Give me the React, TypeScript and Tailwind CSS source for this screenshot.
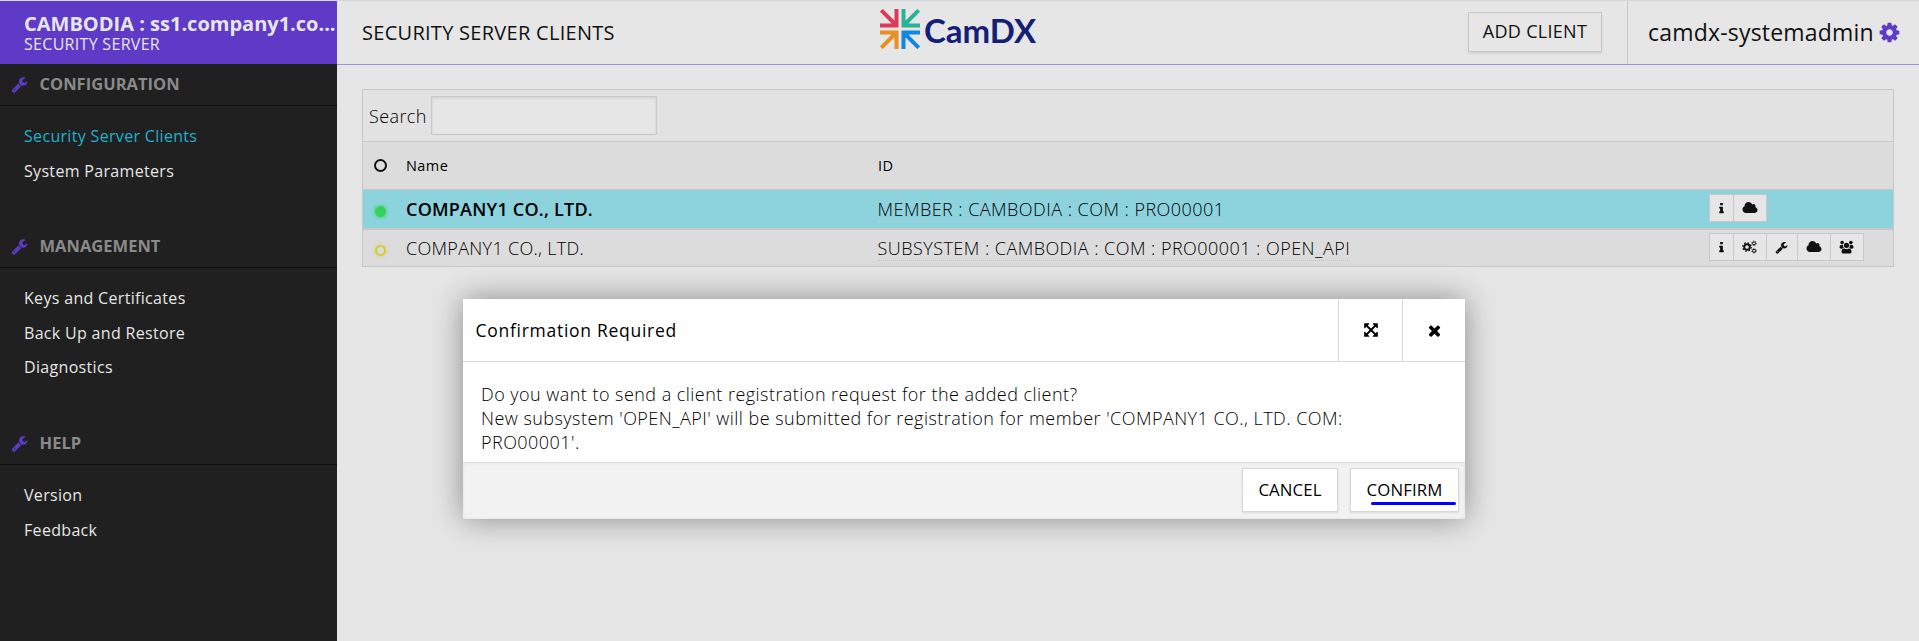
import React from "react";

const paths = {
  times:
    "M1490 1322q0 40-28 68l-136 136q-28 28-68 28t-68-28l-294-294-294 294q-28 28-68 28t-68-28l-136-136q-28-28-28-68t28-68l294-294-294-294q-28-28-28-68t28-68l136-136q28-28 68-28t68 28l294 294 294-294q28-28 68-28t68 28l136 136q28 28 28 68t-28 68l-294 294 294 294q28 28 28 68z",
  expand:
    "M1411 541l-355 355 355 355 144-144q29-31 70-14 39 17 39 59v448q0 26-19 45t-45 19h-448q-42 0-59-40-17-39 14-69l144-144-355-355-355 355 144 144q31 30 14 69-17 40-59 40h-448q-26 0-45-19t-19-45v-448q0-42 40-59 39-17 69 14l144 144 355-355-355-355-144 144q-19 19-45 19-12 0-24-5-40-17-40-59v-448q0-26 19-45t45-19h448q42 0 59 40 17 39-14 69l-144 144 355 355 355-355-144-144q-31-30-14-69 17-40 59-40h448q26 0 45 19t19 45v448q0 42-39 59-13 5-25 5-26 0-45-19z",
  info: "M1216 1344v128q0 26-19 45t-45 19h-512q-26 0-45-19t-19-45v-128q0-26 19-45t45-19h64v-384h-64q-26 0-45-19t-19-45v-128q0-26 19-45t45-19h384q26 0 45 19t19 45v576h64q26 0 45 19t19 45zm-128-1152v192q0 26-19 45t-45 19h-256q-26 0-45-19t-19-45v-192q0-26 19-45t45-19h256q26 0 45 19t19 45z",
  cloud:
    "M1984 1152q0 159-112.5 271.5t-271.5 112.5h-1088q-185 0-316.5-131.5t-131.5-316.5q0-132 71-241.5t187-163.5q-2-28-2-43 0-212 150-362t362-150q158 0 286.5 88t187.5 230q70-62 166-62 106 0 181 75t75 181q0 75-41 138 129 30 213 134.5t84 239.5z",
  wrench:
    "M448 1472q0-26-19-45t-45-19-45 19-19 45 19 45 45 19 45-19 19-45zm644-420l-682 682q-37 37-90 37-52 0-91-37l-106-108q-38-36-38-90 0-53 38-91l681-681q39 98 114.5 173.5t173.5 114.5zm634-435q0 39-23 106-47 134-164.5 217.5t-258.5 83.5q-185 0-316.5-131.5t-131.5-316.5 131.5-316.5 316.5-131.5q58 0 121.5 16.5t107.5 46.5q16 11 16 28t-16 28l-293 169v224l193 107q5-3 79-48.5t135.5-81 70.5-35.5q15 0 23.5 10t8.5 25z",
  cog: "M1152 896q0-106-75-181t-181-75-181 75-75 181 75 181 181 75 181-75 75-181zm512-109v222q0 12-8 23t-20 13l-185 28q-19 54-39 91 35 50 107 138 10 12 10 25t-9 23q-27 37-99 108t-94 71q-12 0-26-9l-138-108q-44 23-91 38-16 136-29 186-7 28-36 28h-222q-14 0-24.5-8.5t-11.5-21.5l-28-184q-49-16-90-37l-141 107q-10 9-25 9-14 0-25-11-126-114-165-168-7-10-7-23 0-12 8-23 15-21 51-66.5t54-70.5q-27-50-41-99l-183-27q-13-2-21-12.5t-8-23.5v-222q0-12 8-23t19-13l186-28q14-46 39-92-40-57-107-138-10-12-10-24 0-10 9-23 26-36 98.5-107.5t94.5-71.5q13 0 26 10l138 107q44-23 91-38 16-136 29-186 7-28 36-28h222q14 0 24.5 8.5t11.5 21.5l28 184q49 16 90 37l142-107q9-9 24-9 13 0 25 10 129 119 165 170 7 8 7 22 0 12-8 23-15 21-51 66.5t-54 70.5q26 50 41 98l183 28q13 2 21 12.5t8 23.5z",
};

function Icon({ name, className, box = "0 0 1792 1792" }: { name: keyof typeof paths; className: string; box?: string }) {
  return (
    <svg viewBox={box} className={className} fill="currentColor">
      <path d={paths[name]} />
    </svg>
  );
}

const InfoIcon = () => <Icon name="info" className="size-[13px]" />;
const CloudIcon = () => <Icon name="cloud" className="h-[14px] w-[16px]" box="0 0 2048 1792" />;

function CogsIcon() {
  return (
    <svg viewBox="0 0 15 14" className="h-[14px] w-[15px]" fill="none" stroke="currentColor">
      <circle cx="5" cy="7" r="2.8" strokeWidth="1.9" />
      <circle cx="5" cy="7" r="4.2" strokeWidth="1.3" strokeDasharray="1.65 1.65" />
      <circle cx="12" cy="3.4" r="1.5" strokeWidth="1" />
      <circle cx="12" cy="3.4" r="2.3" strokeWidth="0.8" strokeDasharray="0.9 0.9" />
      <circle cx="12" cy="10.8" r="1.5" strokeWidth="1" />
      <circle cx="12" cy="10.8" r="2.3" strokeWidth="0.8" strokeDasharray="0.9 0.9" />
    </svg>
  );
}

function UsersIcon() {
  return (
    <svg viewBox="0 0 15 14" className="h-[14px] w-[15px]" fill="currentColor">
      <circle cx="3.1" cy="2.6" r="1.8" />
      <circle cx="11.9" cy="2.6" r="1.8" />
      <path d="M2 5h2q0 1.900.8 2.700-.9.3-1.600 1H2Q.5 8.700.5 7.300.5 5 2 5zM13 5h-2q0 1.900-.8 2.700.9.3 1.600 1H13q1.500 0 1.500-1.400Q14.500 5 13 5z" />
      <circle cx="7.500" cy="5.300" r="2.600" />
      <path d="M5.200 8.500q2.300 1.400 4.600 0 2.800.2 2.700 3.500 0 1.500-1.700 1.500H4.200q-1.700 0-1.700-1.500 0-3.300 2.700-3.500z" />
    </svg>
  );
}

function MenuSection({ title, items, active, className }: { title: string; items: string[]; active?: string; className: string }) {
  return (
    <section className={className}>
      <h2 className="flex h-[42px] items-center border-b border-[#0e0e0e] pb-px pl-[11px] text-[16.5px] font-bold text-[#8a8a8a]">
        <Icon name="wrench" className="mr-[11.5px] size-[17px] text-[#5f3ac6]" />
        <span className="tracking-[0.02px]">{title}</span>
      </h2>
      <ul className="pt-[13px] pl-6 text-[16px] leading-[34.6px] tracking-[0.32px] text-[#e6e6e6]">
        {items.map((item) => (
          <li key={item} className={item === active ? "text-[#20b0cd]" : ""}>
            {item}
          </li>
        ))}
      </ul>
    </section>
  );
}

function Sidebar() {
  return (
    <aside className="flex w-[337px] shrink-0 flex-col bg-[#202020]">
      <div className="h-[63px] bg-[#5f3ac6] pt-[11px] pl-6 text-[#e6e6e6]">
        <div className="h-[24px] text-[20px] leading-6 font-bold whitespace-nowrap">CAMBODIA : ss1.company1.co...</div>
        <div className="text-[16px] leading-[17px] tracking-[0.3px]">SECURITY SERVER</div>
      </div>
      <MenuSection className="h-[162px]" title="CONFIGURATION" items={["Security Server Clients", "System Parameters"]} active="Security Server Clients" />
      <MenuSection className="h-[197px]" title="MANAGEMENT" items={["Keys and Certificates", "Back Up and Restore", "Diagnostics"]} />
      <MenuSection className="h-[160px]" title="HELP" items={["Version", "Feedback"]} />
    </aside>
  );
}

function Logo() {
  return (
    <div className="absolute top-[5px] left-[543px] flex h-11 items-center">
      <svg viewBox="0 0 40 40" className="mt-px size-10" fill="none" strokeWidth="4">
        <path d="M1.300 1.300 15 15M16.500 0V16.500H0" stroke="#dc3a5b" />
        <path d="M38.700 1.300 25 15M23.500 0V16.500H40" stroke="#2bb39a" />
        <path d="M1.300 38.700 15 25M16.500 40V23.500H0" stroke="#e98e20" />
        <path d="M38.700 38.700 25 25M23.500 40V23.500H40" stroke="#1487dc" />
      </svg>
      <span className="mt-[4px] ml-[4px] font-[Lato] text-[33px] leading-none font-bold text-[#151f78]">CamDX</span>
    </div>
  );
}

function Header() {
  return (
    <header className="relative flex h-16 items-center border-b border-[#a58fdd] pl-[25px]">
      <h1 className="flex-1 text-[20px] tracking-[0.28px]">SECURITY SERVER CLIENTS</h1>
      <Logo />
      <button className="mr-[25px] mb-[2px] h-10 w-[134px] border border-[#c8c8c8] text-[18px] tracking-[0.3px] shadow-[0_2px_2px_rgba(0,0,0,0.08)]">ADD CLIENT</button>
      <div className="flex h-full w-[292px] items-center border-l border-[#c8c8c8] pb-px pl-5 text-[23px]">
        <span className="w-[226px] tracking-[0.2px]">camdx-systemadmin</span>
        <Icon name="cog" className="ml-[4px] size-[23px] text-[#5f3ac6]" />
      </div>
    </header>
  );
}

function Actions({ children }: { children: React.ReactNode }) {
  return <div className="mb-[2px] flex h-7 border-l border-[#c8c8c8]">{children}</div>;
}

function Action({ width, children }: { width: string; children: React.ReactNode }) {
  return <button className={`flex items-center justify-center border-y border-r border-[#c8c8c8] bg-[#e6e6e6] text-[#111] ${width}`}>{children}</button>;
}

function ClientTable() {
  return (
    <div className="mt-[24px] ml-[25px] w-[1532px] border border-[#c8c8c8] bg-[#dcdcdc]">
      <div className="flex h-[52px] items-center border-b border-[#c8c8c8] bg-[#e2e2e2] pl-[6px]">
        <label className="w-[62px] pt-[2px] text-[18px] font-light tracking-[0.4px] text-black">Search</label>
        <div className="h-[39px] w-[226px] border border-[#c8c8c8] bg-[#e6e6e6] shadow-[inset_0_1px_3px_rgba(0,0,0,0.1)]" />
      </div>
      <div className="flex h-12 items-center border-b border-[#c8c8c8] text-[14.5px] font-medium tracking-[0.45px] text-black">
        <i className="ml-[11px] size-[13px] rounded-full border-2 border-[#111]" />
        <span className="ml-[19px] w-[472px]">Name</span>
        <span>ID</span>
      </div>
      <div className="flex h-[40px] items-center border-b-2 border-[#c8c8c8] bg-[#8dd3dd] text-[18px] text-black">
        <i className="mt-[4px] ml-[12px] size-[11px] rounded-full bg-[#36d35c] shadow-[0_0_4px_#36d35c]" />
        <span className="ml-[20px] w-[471.5px] font-semibold tracking-[0.22px]">COMPANY1 CO., LTD.</span>
        <span className="flex w-[831px] font-light tracking-[0.46px]">
          <span className="h-[26px] border-b border-dotted border-[#bcd0d3] leading-[27px]">MEMBER : CAMBODIA : COM : PRO00001</span>
        </span>
        <Actions>
          <Action width="w-6"><InfoIcon /></Action>
          <Action width="w-[33px]"><CloudIcon /></Action>
        </Actions>
      </div>
      <div className="flex h-9 items-center text-[18px] font-light text-black">
        <i className="mt-[4px] ml-[12px] size-[11px] rounded-full border-2 border-[#d8cc35] shadow-[0_0_4px_#d8cc3599]" />
        <span className="ml-[20px] w-[471.5px] pt-px tracking-[0.3px]">COMPANY1 CO., LTD.</span>
        <span className="flex w-[831px] tracking-[0.46px]">
          <span className="h-[26px] border-b border-dotted border-[#c4c4c4] leading-[27px]">SUBSYSTEM : CAMBODIA : COM : PRO00001 : OPEN_API</span>
        </span>
        <Actions>
          <Action width="w-6"><InfoIcon /></Action>
          <Action width="w-[33px]"><CogsIcon /></Action>
          <Action width="w-[31px]"><Icon name="wrench" className="size-[13px]" /></Action>
          <Action width="w-[33px]"><CloudIcon /></Action>
          <Action width="w-[33px]"><UsersIcon /></Action>
        </Actions>
      </div>
    </div>
  );
}

function ConfirmDialog() {
  return (
    <div role="dialog" className="absolute top-[299px] left-[463px] h-[220px] w-[1002px] bg-white text-black shadow-[0_0_30px_rgba(0,0,0,0.4)]">
      <div className="flex h-[63px] border-b border-[#d8d8d8]">
        <h3 className="flex-1 pl-[12.5px] text-[17.5px] leading-[62px] font-medium tracking-[0.72px]">Confirmation Required</h3>
        <button className="flex w-[64px] items-center justify-center border-l border-[#d8d8d8]"><Icon name="expand" className="size-[16px]" /></button>
        <button className="flex w-[63px] items-center justify-center border-l border-[#d8d8d8]"><Icon name="times" className="size-[17px]" /></button>
      </div>
      <div className="h-[100px] pt-[20px] pl-[18px] text-[18px] leading-6 font-light tracking-[0.46px] whitespace-nowrap">
        <p>Do you want to send a client registration request for the added client?</p>
        <p>New subsystem 'OPEN_API' will be submitted for registration for member 'COMPANY1 CO., LTD. COM:</p>
        <p>PRO00001'.</p>
      </div>
      <div className="flex h-[57px] justify-end gap-[12px] border-t border-[#dedede] bg-[#f2f2f2] pt-[5px] pr-[6px] text-[16.8px] shadow-[inset_0_0_4px_rgba(0,0,0,0.06)]">
        <button className="h-11 w-[96px] border border-[#d8d8d8] bg-white tracking-[0.1px] shadow-[0_1px_2px_rgba(0,0,0,0.1)]">CANCEL</button>
        <button className="relative h-11 w-[109px] border border-[#d8d8d8] bg-white tracking-[0.1px] shadow-[0_1px_2px_rgba(0,0,0,0.1)]">
          CONFIRM
          <span className="absolute top-[33px] left-[20px] h-[3px] w-[85px] rounded-full bg-[#0000ff]" />
        </button>
      </div>
    </div>
  );
}

export default function App() {
  return (
    <div className="relative flex h-[641px] w-[1919px] overflow-hidden border-t border-[#d3d7db] bg-[#e6e6e6] font-['Open_Sans',sans-serif] text-[#111]">
      <Sidebar />
      <main className="flex-1">
        <Header />
        <ClientTable />
      </main>
      <div className="absolute -top-px left-0">
        <ConfirmDialog />
      </div>
    </div>
  );
}
